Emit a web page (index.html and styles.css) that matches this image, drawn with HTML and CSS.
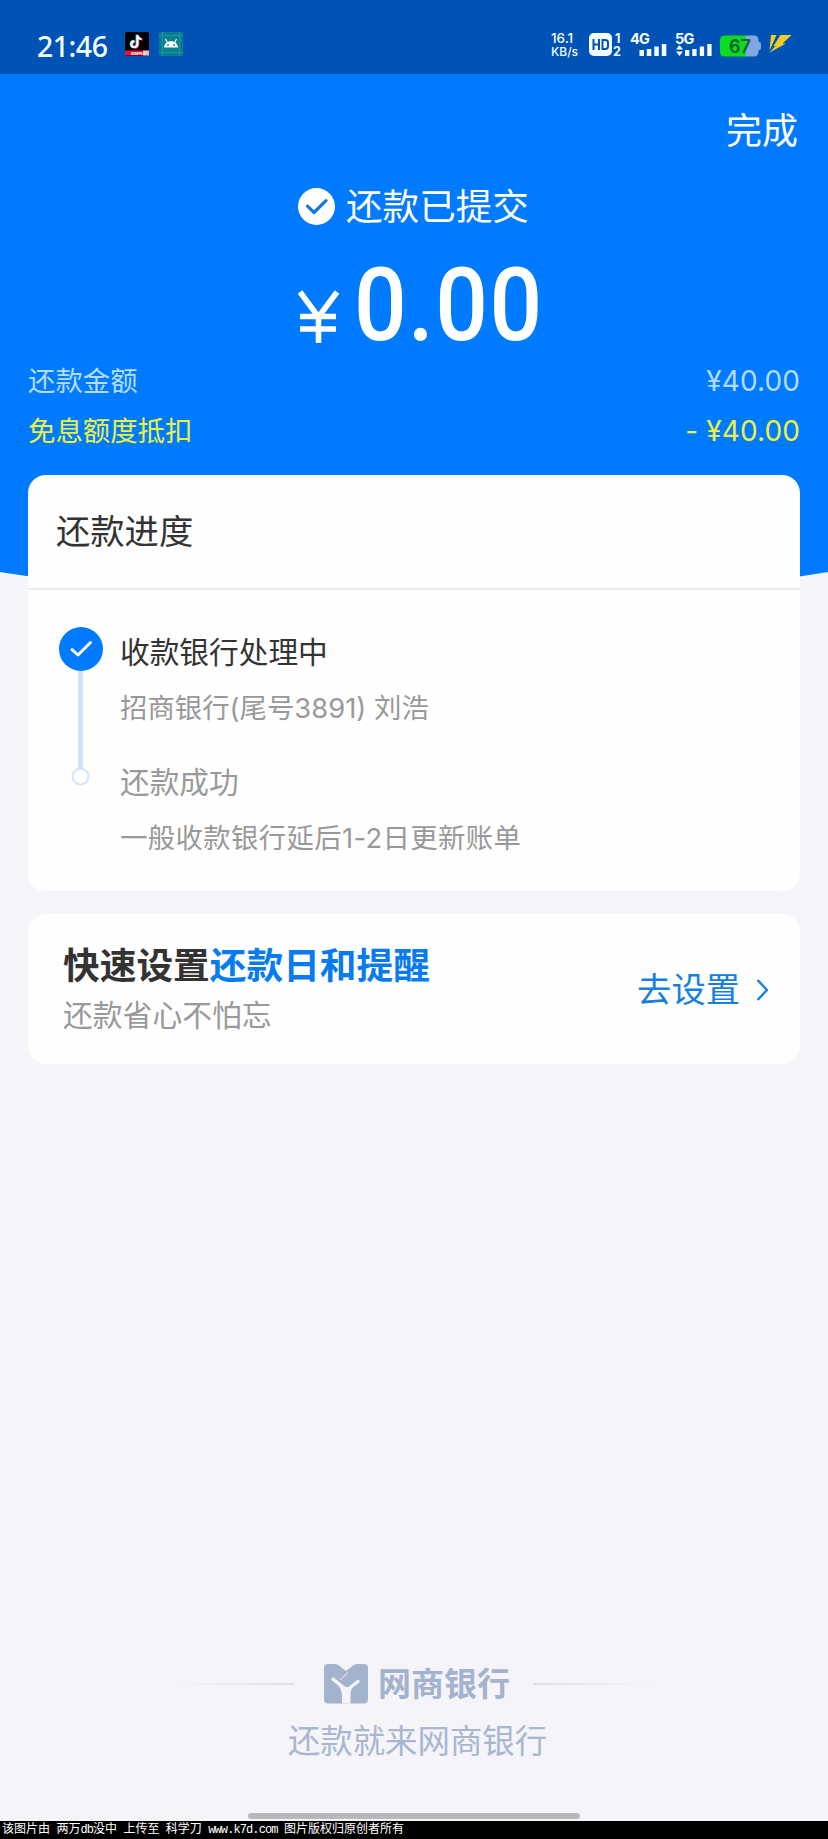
FILE: index.html
```html
<!DOCTYPE html>
<html lang="zh-CN">
<head>
<meta charset="utf-8">
<title>还款已提交</title>
<link rel="stylesheet" href="styles.css">
</head>
<body>
<div class="status">
  <span class="clock">21:46</span>
  <svg class="app-icon" width="24" height="24" viewBox="0 0 24 24">
    <rect width="24" height="24" rx="2" fill="#000"/>
    <rect y="18.500" width="24" height="5" fill="#e8113c"/>
    <path d="M18 18.500h6v5h-6z" fill="#f7b5bd"/>
    <path d="M12.500 3v9.200a3 3 0 1 1-3-3M12.500 3c.3 2.700 2 4 4.200 4.200" transform="translate(-.8 -.3)" fill="none" stroke="#25f4ee" stroke-width="2.200"/>
    <path d="M12.500 3v9.200a3 3 0 1 1-3-3M12.500 3c.3 2.700 2 4 4.200 4.200" transform="translate(.8 .5)" fill="none" stroke="#fe2c55" stroke-width="2"/>
    <path d="M12.500 3v9.200a3 3 0 1 1-3-3M12.500 3c.3 2.700 2 4 4.200 4.200" fill="none" stroke="#fff" stroke-width="2"/>
    <text x="6" y="22.600" class="tiny">SIMPLE</text>
  </svg>
  <svg class="app-icon robot" width="24" height="24" viewBox="0 0 24 24">
    <rect width="24" height="24" rx="2" fill="#087f91"/>
    <path d="M0 3.500h24M0 20.500h24M3.500 0v24M20.500 0v24" stroke="#269f9b" stroke-width=".7"/>
    <path d="M5 15.500c.3-3.800 3-6.200 7-6.200s6.700 2.400 7 6.200z" fill="#fff"/>
    <path d="M8.300 10.500 6.500 7M15.700 10.500 17.500 7" stroke="#fff" stroke-width="1.200"/>
    <circle cx="9" cy="13" r=".9" fill="#087f91"/><circle cx="15" cy="13" r=".9" fill="#087f91"/>
  </svg>
  <div class="status-right">
    <div class="speed"><span class="rate">16.1</span><span>KB/s</span></div>
    <svg class="hd" width="34" height="24" viewBox="0 0 34 24">
      <rect x="1" width="23" height="23" rx="5" fill="#f4fdff"/>
      <path d="M5.500 6v11M11 6v11M5.500 11.500H11M14.500 7h2.800q2.700 0 2.700 2.700v3.600q0 2.700-2.700 2.700h-2.800z" fill="none" stroke="#0053b5" stroke-width="2"/>
      <text x="27" y="9.500" class="sim">1</text>
      <text x="25" y="23" class="sim">2</text>
    </svg>
    <svg class="signal" width="38" height="24" viewBox="0 0 38 24">
      <text x="0" y="11" class="net">4G</text>
      <path d="M9.500 17h4.500v6H9.500zM16.800 16h4.500v7h-4.500zM24.300 13.500h4.500V23h-4.500zM31.800 11h4.500v12h-4.500z" fill="#f4fdff"/>
    </svg>
    <svg class="signal second" width="38" height="24" viewBox="0 0 38 24">
      <text x="0" y="11" class="net">5G</text>
      <path d="M1 16.500 4.500 12 8 16.500zM1 18.500h7L4.500 23zM10 17h4.300v6H10zM17.300 16h4.300v7h-4.300zM24.800 13.500h4.300V23h-4.300zM32.300 11h4.300v12h-4.300z" fill="#f4fdff"/>
    </svg>
    <svg class="battery" width="42" height="22" viewBox="0 0 42 22">
      <path d="M26 .5h7.500q5 0 5 5v1l1.500.8q1 .5 1 1.500v4.400q0 1-1 1.500l-1.500.8v1q0 5-5 5H26z" fill="#80a9df"/>
      <path d="M26 .5H5q-5 0-5 5v11q0 5 5 5h21z" fill="#0cdb25"/>
      <text x="9" y="18" class="charge" textLength="22" lengthAdjust="spacingAndGlyphs">67</text>
    </svg>
    <svg class="bolt" width="24" height="20" viewBox="0 0 24 20">
      <path d="M3 1H8.500L4.500 10 1.500 16.500zM12.500 1H23.500L14.500 9.500h3.300L1 19 7.500 12H5.500z" fill="#f3cd27"/>
    </svg>
  </div>
</div>

<header class="hero">
  <a class="done">完成</a>
  <div class="result">
    <svg width="37" height="37" viewBox="0 0 37 37"><circle cx="18.500" cy="18.500" r="18.500" fill="#fff"/><path d="M9.500 18.200 16 24.500 28 12.700" fill="none" stroke="#1478df" stroke-width="3.200" stroke-linecap="round" stroke-linejoin="round"/></svg>
    <span>还款已提交</span>
  </div>
  <div class="total">
    <svg width="42" height="52" viewBox="0 0 42 52"><path d="M2 0 20.500 25 39 0M20.500 24v27M2 24.500h36M2 37h36" fill="none" stroke="#fff" stroke-width="5.600"/></svg>
    <span class="total-num">0.00</span>
  </div>
  <div class="line pale"><span>还款金额</span><span class="money">¥40.00</span></div>
  <div class="line yellow"><span>免息额度抵扣</span><span class="money">- ¥40.00</span></div>
</header>

<main class="content">
  <section class="card">
    <h2 class="card-title">还款进度</h2>
    <div class="steps">
      <svg class="track" width="44" height="160" viewBox="0 0 44 160">
        <path d="M21.500 40v101" stroke="#cde4fb" stroke-width="5"/>
        <circle cx="22" cy="22" r="22" fill="#007aff"/>
        <path d="M13 22.700 19 28 31.500 15.500" fill="none" stroke="#fff" stroke-width="3" stroke-linecap="round" stroke-linejoin="round"/>
        <circle cx="21.500" cy="149.500" r="8" fill="#fff" stroke="#cde4fb" stroke-width="2"/>
      </svg>
      <div class="step-text">
        <p class="step-name current">收款银行处理中</p>
        <p class="step-note">招商银行(尾号3891) 刘浩</p>
        <p class="step-name next">还款成功</p>
        <p class="step-note last">一般收款银行延后1-2日更新账单</p>
      </div>
    </div>
  </section>

  <section class="card promo">
    <div>
      <p class="promo-title">快速设置<span class="accent">还款日和提醒</span></p>
      <p class="promo-sub">还款省心不怕忘</p>
    </div>
    <a class="promo-link">去设置<svg width="14" height="24" viewBox="0 0 14 24"><path d="M2.500 2 12 12 2.500 22" fill="none" stroke="#167fe0" stroke-width="2.400" stroke-linejoin="round"/></svg></a>
  </section>
</main>

<footer class="footer">
  <div class="brand">
    <i class="rule left"></i>
    <svg width="44" height="40" viewBox="0 0 44 40">
      <path d="M4 0H11Q13 0 15 1.500L22 7 29 1.500Q31 0 33 0H40Q44 0 44 4V35Q44 39.500 39.500 39.500H4.500Q0 39.500 0 35V4Q0 0 4 0Z" fill="#a3b2cd"/>
      <path d="M9 15 20 24M34 17.500 23.500 25.500" fill="none" stroke="#f4f4f9" stroke-width="3.400" stroke-linecap="round"/>
      <path d="M18 39.500V31Q18 27 14.500 21.500L22 23 28 23.500Q26.500 27 26.500 31V39.500Z" fill="#f4f4f9"/>
      <path d="M16 16 24 8.500" stroke="#f4f4f9" stroke-width="1"/>
    </svg>
    <span class="brand-name">网商银行</span>
    <i class="rule right"></i>
  </div>
  <p class="slogan">还款就来网商银行</p>
  <div class="home-bar"></div>
</footer>
<div class="credit">该图片由 两万<span class="latin">db</span>没中 上传至 科学刀 <span class="latin">www.k7d.com</span> 图片版权归原创者所有</div>
</body>
</html>
```

FILE: styles.css
```css
* { box-sizing: border-box; }
body {
  margin: 0;
  width: 828px;
  height: 1839px;
  overflow: hidden;
  display: flex;
  flex-direction: column;
  background: #f4f4f9;
  color: #333;
  font-family: Inter, "Noto Sans CJK SC", sans-serif;
}
p, h2 { margin: 0; font-weight: 400; }
svg { display: block; flex: none; overflow: visible; }

.status {
  height: 74px;
  flex: none;
  background: #0053b5;
  display: flex;
  align-items: flex-start;
  padding: 32px 36px 0 37px;
  color: #f4fdff;
}
.clock { width: 88px; font: 500 28.500px/28px "Noto Sans", sans-serif; letter-spacing: -.5px; white-space: nowrap; }
.app-icon { margin-right: 10px; }
.status-right { display: flex; margin-left: auto; }
.speed {
  width: 37px;
  display: flex;
  flex-direction: column;
  font: 500 12px/13px Inter, sans-serif;
}
.rate { font-size: 13.500px; }
.hd { margin-top: 1px; }
.signal { margin: 1px 0 0 8px; }
.signal.second { margin-left: 7px; }
.battery { margin: 3px 0 0 7px; }
.bolt { margin: 2px 0 0 6px; }
.tiny { font: italic 700 4px Inter, sans-serif; fill: #fff; }
.sim { font: 700 12.500px Inter, sans-serif; fill: #f4fdff; }
.net { font: 700 14.500px Inter, sans-serif; fill: #f4fdff; letter-spacing: -.8px; }
.charge { font: 600 19px Inter, sans-serif; fill: #10652c; }

.hero {
  height: 540px;
  flex: none;
  background: #007aff;
  clip-path: path("M0 0H828V498Q414 566 0 498Z");
  padding: 33px 28px 0;
  display: flex;
  flex-direction: column;
  color: #fff;
}
.done { align-self: flex-end; margin-right: 2px; font-size: 36px; line-height: 48px; }
.result {
  margin: 31px 0 0 270px;
  height: 40px;
  display: flex;
  align-items: center;
  gap: 11px;
  font-size: 36.600px;
  line-height: 40px;
}
.result span { padding-top: 2px; }
.total { display: flex; height: 100px; margin: 28px 0 0 270px; }
.total svg { margin-top: 38px; }
.total-num {
  margin: -4px 0 0 14px;
  font: 500 102px/110px Roboto, sans-serif;
  letter-spacing: 1.500px;
  transform: scaleX(.91);
  transform-origin: left;
}
.line { display: flex; justify-content: space-between; font-size: 27.400px; line-height: 49px; }
.pale { margin-top: 3px; color: #b3dcff; }
.yellow { color: #ebf23f; }
.yellow span { position: relative; top: 1px; }
.money { font-size: 28px; font-weight: 400; letter-spacing: .1px; }

.content {
  position: relative;
  margin: -139px 28px 0;
  display: flex;
  flex-direction: column;
  gap: 23px;
}
.card { background: #fefefe; border-radius: 18px; height: 416px; }
.card-title {
  height: 115px;
  border-bottom: 2px solid #ebebed;
  padding-left: 28px;
  font-size: 34.300px;
  line-height: 114px;
}
.steps { display: flex; gap: 17px; padding: 37px 0 0 31px; }
.step-text { padding-top: 5px; white-space: nowrap; }
.step-name { font-size: 29.700px; line-height: 40px; }
.step-note { font-size: 27.400px; line-height: 36px; margin-top: 18px; color: #999; }
.last { letter-spacing: .35px; }
.next { margin-top: 36px; color: #999; }
.promo {
  height: 150px;
  display: flex;
  justify-content: space-between;
  padding: 29px 31px 0 35px;
}
.promo-title { font-size: 36.700px; line-height: 46px; font-weight: 700; }
.accent { color: #087bf0; }
.promo-sub { font-size: 29.800px; line-height: 40px; margin-top: 6px; color: #999; }
.promo-link {
  height: 46px;
  margin-top: 24px;
  display: flex;
  align-items: center;
  gap: 15px;
  color: #167fe0;
  font-size: 34.300px;
  line-height: 46px;
}

.footer { margin-top: auto; display: flex; flex-direction: column; align-items: center; }
.brand { width: 470px; display: flex; align-items: center; height: 40px; }
.brand-name { width: 132px; margin-left: 10px; color: #a3b2cd; font-size: 33px; line-height: 40px; font-weight: 700; white-space: nowrap; }
.rule { height: 2px; width: 116px; flex: none; }
.left { width: 115px; margin-right: 30px; background: linear-gradient(90deg, #f4f4f9, #dddde6); }
.right { margin-left: 23px; background: linear-gradient(270deg, #f4f4f9, #dddde6); }
.slogan { margin: 18px 0 0 7px; font-size: 32.400px; line-height: 40px; color: #a9b6cf; }
.home-bar { margin-top: 51px; width: 332px; height: 6px; border-radius: 3px; background: #b9b9bb; }
.credit {
  height: 18px;
  margin-top: 2px;
  flex: none;
  background: #000;
  color: #fff;
  padding-left: 2px;
  white-space: pre;
  word-spacing: -.8px;
  font: 12px/18px "Liberation Mono", "Noto Sans CJK SC", monospace;
}
.latin { letter-spacing: -.9px; }
```
